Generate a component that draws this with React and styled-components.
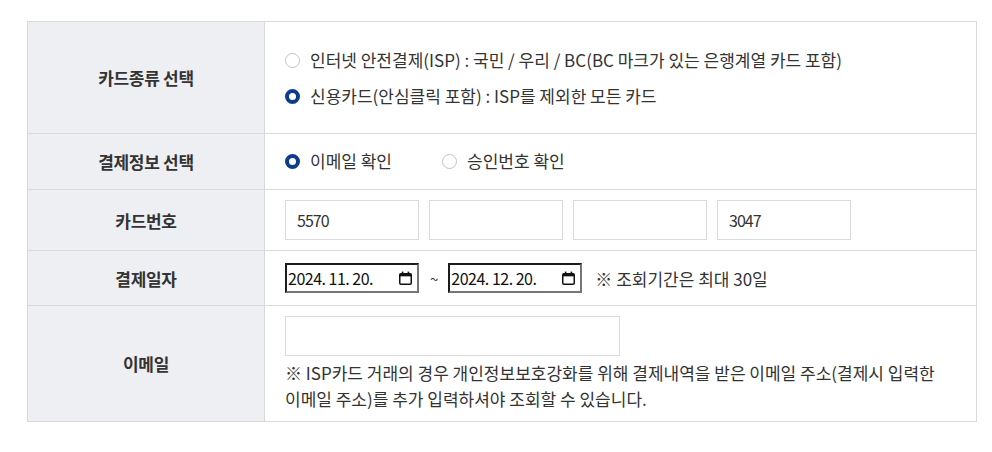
import React, { useState } from 'react';
import styled, { createGlobalStyle } from 'styled-components';

const GlobalStyle = createGlobalStyle`
  body {
    margin: 0;
    background: #fff;
    font-family: "Noto Sans CJK KR", "Noto Sans", sans-serif;
    color: #333;
    word-break: keep-all;
  }
`;

const Page = styled.div`
  padding: 21px 0 0 27px;
`;

const Table = styled.div`
  display: grid;
  grid-template-columns: 237px 1fr;
  width: 950px;
  box-sizing: border-box;
  border: 1px solid #d9d9d9;
`;

const HeadCell = styled.div`
  display: flex;
  align-items: center;
  justify-content: center;
  background: #eeeff3;
  border-right: 1px solid #d9d9d9;
  border-bottom: ${p => (p.$last ? 'none' : '1px solid #d9d9d9')};
  font-size: 17px;
  letter-spacing: -0.3px;
  font-weight: 700;
  color: #333;
`;

const DataCell = styled.div`
  padding: ${p => p.$pad || '10px 20px'};
  border-bottom: ${p => (p.$last ? 'none' : '1px solid #d9d9d9')};
  display: flex;
  flex-direction: ${p => (p.$column ? 'column' : 'row')};
  align-items: ${p => (p.$column ? 'flex-start' : 'center')};
  gap: ${p => p.$gap || '0'};
`;

const OptionLabel = styled.label`
  display: flex;
  align-items: center;
  gap: 10px;
  font-size: 17px;
  line-height: 26px;
  color: #333;
  cursor: pointer;
`;

const Radio = styled.input.attrs({ type: 'radio' })`
  appearance: none;
  -webkit-appearance: none;
  margin: 0;
  width: 15px;
  height: 15px;
  border-radius: 50%;
  border: 1px solid #c2c2c2;
  background: #fff;
  box-sizing: border-box;
  flex-shrink: 0;
  cursor: pointer;

  &:checked {
    border: 4.5px solid #0d3d8a;
  }
`;

const InlineOptions = styled.div`
  display: flex;
  align-items: center;
  gap: 50px;
`;

const CardInputs = styled.div`
  display: flex;
  gap: 10px;
`;

const TextInput = styled.input`
  width: ${p => p.$width || '134px'};
  height: 40px;
  box-sizing: border-box;
  border: 1px solid #dcdcdc;
  padding: 0 11px;
  font-family: inherit;
  font-size: 16px;
  letter-spacing: -1px;
  color: #333;
  outline: none;
`;

const DateBox = styled.div`
  width: 134px;
  height: 30px;
  box-sizing: border-box;
  display: flex;
  align-items: center;
  justify-content: space-between;
  padding: 0 5px 0 1px;
  border-style: solid;
  border-width: 2px;
  border-color: #1c1c1c #767676 #767676 #1c1c1c;
  font-size: 16px;
  letter-spacing: -0.5px;
  color: #111;
`;

const Tilde = styled.span`
  margin: 0 10px 0 11px;
  font-size: 15px;
  color: #333;
`;

const Notice = styled.span`
  margin-left: 13px;
  font-size: 17px;
  color: #333;
`;

const Note = styled.p`
  margin: 4px 0 0;
  font-size: 17px;
  line-height: 26px;
  color: #333;
  word-break: keep-all;
`;

function CalendarIcon() {
  return (
    <svg width="13" height="14" viewBox="0 0 13 14">
      <rect x="0.75" y="2.75" width="11.5" height="10.5" rx="1.2" fill="none" stroke="#111" strokeWidth="1.5" />
      <rect x="0.75" y="2.75" width="11.5" height="2.6" fill="#111" />
      <rect x="2.8" y="0.6" width="1.6" height="3" fill="#111" />
      <rect x="8.6" y="0.6" width="1.6" height="3" fill="#111" />
    </svg>
  );
}

export default function App() {
  const [cardType, setCardType] = useState('credit');
  const [infoType, setInfoType] = useState('email');
  const [cardNo, setCardNo] = useState(['5570', '', '', '3047']);
  const [email, setEmail] = useState('');

  const setCardPart = (i, v) => {
    const next = [...cardNo];
    next[i] = v;
    setCardNo(next);
  };

  return (
    <Page>
      <GlobalStyle />
      <Table>
        <HeadCell>카드종류 선택</HeadCell>
        <DataCell $column $pad="25px 20px 24px" $gap="10px">
          <OptionLabel>
            <Radio name="cardType" checked={cardType === 'isp'} onChange={() => setCardType('isp')} />
            인터넷 안전결제(ISP) : 국민 / 우리 / BC(BC 마크가 있는 은행계열 카드 포함)
          </OptionLabel>
          <OptionLabel>
            <Radio name="cardType" checked={cardType === 'credit'} onChange={() => setCardType('credit')} />
            신용카드(안심클릭 포함) : ISP를 제외한 모든 카드
          </OptionLabel>
        </DataCell>

        <HeadCell>결제정보 선택</HeadCell>
        <DataCell $pad="14px 20px 15px">
          <InlineOptions>
            <OptionLabel>
              <Radio name="infoType" checked={infoType === 'email'} onChange={() => setInfoType('email')} />
              이메일 확인
            </OptionLabel>
            <OptionLabel>
              <Radio name="infoType" checked={infoType === 'approval'} onChange={() => setInfoType('approval')} />
              승인번호 확인
            </OptionLabel>
          </InlineOptions>
        </DataCell>

        <HeadCell>카드번호</HeadCell>
        <DataCell>
          <CardInputs>
            {cardNo.map((v, i) => (
              <TextInput key={i} value={v} onChange={e => setCardPart(i, e.target.value)} />
            ))}
          </CardInputs>
        </DataCell>

        <HeadCell>결제일자</HeadCell>
        <DataCell $pad="12px 20px">
          <DateBox>
            <span>2024. 11. 20.</span>
            <CalendarIcon />
          </DateBox>
          <Tilde>~</Tilde>
          <DateBox>
            <span>2024. 12. 20.</span>
            <CalendarIcon />
          </DateBox>
          <Notice>※ 조회기간은 최대 30일</Notice>
        </DataCell>

        <HeadCell $last>이메일</HeadCell>
        <DataCell $last $column $pad="10px 20px 9px">
          <TextInput $width="335px" value={email} onChange={e => setEmail(e.target.value)} />
          <Note>
            ※ ISP카드 거래의 경우 개인정보보호강화를 위해 결제내역을 받은 이메일 주소(결제시 입력한 이메일 주소)를 추가 입력하셔야 조회할 수 있습니다.
          </Note>
        </DataCell>
      </Table>
    </Page>
  );
}
